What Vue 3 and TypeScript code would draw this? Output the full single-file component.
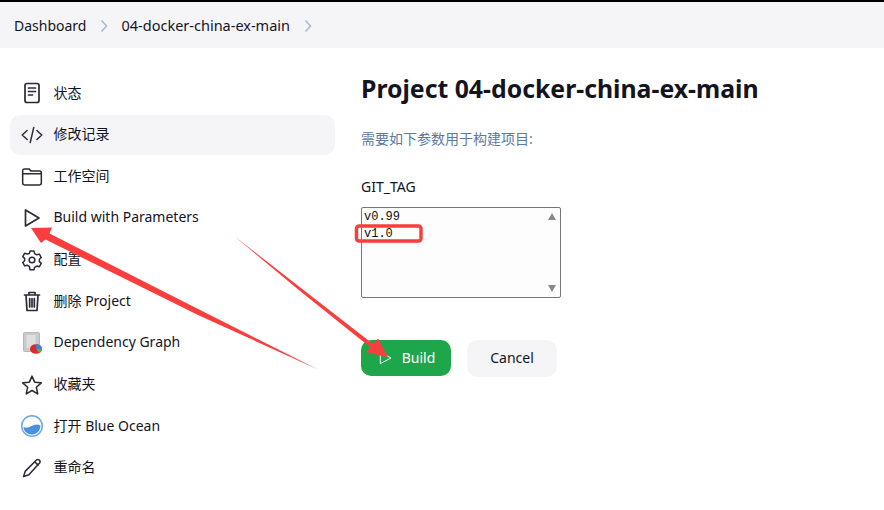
<template>
  <div class="page">
    <div class="topline"></div>
    <nav class="crumbs">
      <span>Dashboard</span>
      <svg class="chev" viewBox="0 0 8 14"><path d="M1.5 1.5 6.5 7l-5 5.5" /></svg>
      <span class="job">04-docker-china-ex-main</span>
      <svg class="chev" viewBox="0 0 8 14"><path d="M1.5 1.5 6.5 7l-5 5.5" /></svg>
    </nav>

    <div class="layout">
      <aside class="side">
        <a v-for="item in items" :key="item.label" class="task" :class="{ active: item.active }">
          <span class="ico">
            <svg v-if="item.icon === 'doc'" viewBox="0 0 24 24" class="ln"><rect x="5" y="2.500" width="14" height="19" rx="2" /><path d="M8.500 7h7M8.500 10.500h7M8.500 14h4" /></svg>
            <svg v-else-if="item.icon === 'code'" viewBox="-1.500 -1.500 27 27" class="ln"><path d="M6.500 7 1 12l5.500 5M17.500 7l5.500 5-5.500 5M14 3.500 10 20.500" /></svg>
            <svg v-else-if="item.icon === 'folder'" viewBox="-1.500 -1.500 27 27" class="ln"><path d="M1.500 18.500V6a2 2 0 0 1 2-2h5l2.500 2.500h9.500a2 2 0 0 1 2 2V20a2 2 0 0 1-2 2h-17a2 2 0 0 1-2-2v-1.500Z" /><path d="M1.500 9.500h21" /></svg>
            <svg v-else-if="item.icon === 'play'" viewBox="0 0 24 24" class="ln"><path d="M5.500 4v16L19 12 5.500 4Z" /></svg>
            <svg v-else-if="item.icon === 'gear'" viewBox="-1.500 -1.500 27 27" class="ln"><circle cx="12" cy="12" r="3.200" /><path d="M9.800 2h4.400l.8 2.800 2.400 1.400 2.900-.8 2.100 3.800-2.100 2v2.600l2.100 2-2.100 3.800-2.900-.8-2.400 1.400-.8 2.800H9.800L9 19.200l-2.400-1.400-2.900.8-2.100-3.800 2.100-2v-2.600l-2.100-2 2.100-3.800 2.900.8L9 4.800 9.800 2Z" /></svg>
            <svg v-else-if="item.icon === 'trash'" viewBox="0 0 24 24" class="ln"><path d="M4.500 6h15M9 6V3.500h6V6M6 6l1 15.500h10L18 6M9.700 9.500v8.500M12 9.500v8.500M14.300 9.500v8.500" /></svg>
            <svg v-else-if="item.icon === 'graph'" viewBox="0 0 24 24"><rect x="3.500" y="1.500" width="16" height="19" rx="1" fill="#cacaca" stroke="#b8b8b8" /><rect x="6.500" y="4" width="9" height="13" fill="#dfdfdf" /><ellipse cx="16" cy="18" rx="6" ry="4.800" fill="#d92b2b" /><path d="M16 18v-4.800a6 4.800 0 0 1 6 4.800Z" fill="#4a7fc9" /><path d="M16 18h6a6 4.800 0 0 1-3 4.100Z" fill="#5fae3c" /></svg>
            <svg v-else-if="item.icon === 'star'" viewBox="-1.500 -1.500 27 27" class="ln"><path d="m12 2 3 6.800 7.500.8-5.600 5 1.600 7.400-6.500-3.800L5.500 22l1.600-7.400-5.600-5 7.500-.8L12 2Z" /></svg>
            <svg v-else-if="item.icon === 'ocean'" viewBox="0 0 24 24"><circle cx="12" cy="12" r="10.300" fill="#fff" stroke="#6ea6e6" stroke-width="1.500" /><path d="M3.500 13c3 1.500 5 .5 8-1s6-2 9-.5c0 5-4 9-8.500 9S3.500 17 3.500 13Z" fill="#4a90dc" /></svg>
            <svg v-else viewBox="-1.500 -1.500 27 27" class="ln"><path d="M2.500 21.500 4.500 15.500 17 3a2.200 2.200 0 0 1 3.200.1 2.400 2.400 0 0 1 .3 3.300L8.500 19.500l-6 2ZM15 5l3.800 3.800" /></svg>
          </span>
          <span class="label">{{ item.label }}</span>
        </a>
      </aside>

      <main class="content">
        <h1>Project 04-docker-china-ex-main</h1>
        <p class="desc">需要如下参数用于构建项目:</p>
        <label class="param">GIT_TAG</label>
        <div class="listbox">
          <div>v0.99</div>
          <div>v1.0</div>
          <i class="arr up"></i>
          <i class="arr down"></i>
        </div>
        <div class="buttons">
          <button class="btn build">
            <svg viewBox="0 0 24 24" class="btn-ico"><path d="M5 3.500v17L21 12 5 3.500Z" /></svg>
            Build
          </button>
          <button class="btn cancel">Cancel</button>
        </div>
      </main>
    </div>

    <!-- annotations drawn over the screenshot -->
    <svg class="marks" width="884" height="510" viewBox="0 0 884 510">
      <path fill="#fa3e3e" d="M31 228 52 227.500 49.500 233.500 200 310 318 369.500 198 315 45.500 239.500 41 243Z" />
      <path fill="#fa3e3e" d="M234 236 373 344 378 338.500 388 357.500 366 352 370.500 347.500 300 291Z" />
      <rect x="356.500" y="226" width="64.500" height="15" rx="2.500" fill="none" stroke="#fa3e3e" stroke-width="3.500" />
    </svg>
  </div>
</template>

<script setup lang="ts">
interface Task {
  label: string;
  icon: string;
  active?: boolean;
}

const items: Task[] = [
  { label: "状态", icon: "doc" },
  { label: "修改记录", icon: "code", active: true },
  { label: "工作空间", icon: "folder" },
  { label: "Build with Parameters", icon: "play" },
  { label: "配置", icon: "gear" },
  { label: "删除 Project", icon: "trash" },
  { label: "Dependency Graph", icon: "graph" },
  { label: "收藏夹", icon: "star" },
  { label: "打开 Blue Ocean", icon: "ocean" },
  { label: "重命名", icon: "pencil" },
];
</script>

<style>
html,
body {
  margin: 0;
  background: #fff;
}
</style>

<style scoped>
.page {
  position: relative;
  width: 884px;
  height: 510px;
  overflow: hidden;
  font-family: "Noto Sans", "Noto Sans CJK SC", sans-serif;
  font-size: 14px;
  color: #14141f;
  background: #fff;
}

.topline {
  height: 2px;
  background: #000;
}

.crumbs {
  height: 46px;
  background: #f5f5f8;
  display: flex;
  align-items: center;
  padding-left: 14px;
}

.job {
  font-size: 14.5px;
}

.chev {
  width: 8px;
  height: 14px;
  margin: 1px 13.500px 0 13.500px;
  fill: none;
  stroke: #a9b7cc;
  stroke-width: 1.5;
}

.layout {
  display: flex;
}

.side {
  width: 325px;
  margin: 25px 0 0 10px;
  display: flex;
  flex-direction: column;
  gap: 1.67px;
}

.task {
  height: 40px;
  display: flex;
  align-items: center;
  gap: 9.500px;
  padding-left: 10px;
  border-radius: 10px;
}

.label {
  padding-bottom: 3px;
}

.task.active {
  background: #f5f5f8;
}

.ico {
  width: 24px;
  height: 24px;
  flex: none;
  display: block;
}

.ico svg {
  display: block;
  width: 24px;
  height: 24px;
}

.ln {
  fill: none;
  stroke: #2b2b36;
  stroke-width: 1.7;
  stroke-linecap: round;
  stroke-linejoin: round;
}

.content {
  margin-left: 26px;
  width: 480px;
}

h1 {
  margin: 24px 0 0;
  font-size: 24.8px;
  line-height: 32px;
  font-weight: 700;
}

.desc {
  margin: 25px 0 0;
  font-size: 14px;
  line-height: 20px;
  color: #5c7a9e;
}

.param {
  display: block;
  margin-top: 28px;
  line-height: 20px;
}

.listbox {
  position: relative;
  box-sizing: border-box;
  width: 200px;
  height: 91px;
  margin-top: 10px;
  padding: 1px 2px;
  border: 1px solid #767676;
  border-radius: 2px;
  background: #fdfdfd;
  font-family: "Liberation Mono", monospace;
  font-size: 12px;
  line-height: 17px;
  color: #111;
}

.arr {
  position: absolute;
  right: 4px;
  border-left: 4px solid transparent;
  border-right: 4px solid transparent;
}

.arr.up {
  top: 5px;
  border-bottom: 7px solid #8a8a8a;
}

.arr.down {
  bottom: 5px;
  border-top: 7px solid #8a8a8a;
}

.buttons {
  display: flex;
  gap: 16px;
  margin-top: 42px;
}

.btn {
  width: 90px;
  height: 36px;
  display: flex;
  align-items: center;
  justify-content: center;
  gap: 9px;
  border: 0;
  border-radius: 10px;
  padding: 0 0 2px;
  font: inherit;
}

.build {
  background: #1ea64b;
  color: #fff;
}

.cancel {
  background: #f5f5f8;
  color: #14141f;
  height: 37px;
}

.btn-ico {
  width: 16px;
  height: 16px;
  margin-top: 2px;
  fill: none;
  stroke: #fff;
  stroke-width: 1.4;
}

.marks {
  position: absolute;
  top: 0;
  left: 0;
  pointer-events: none;
}
</style>
